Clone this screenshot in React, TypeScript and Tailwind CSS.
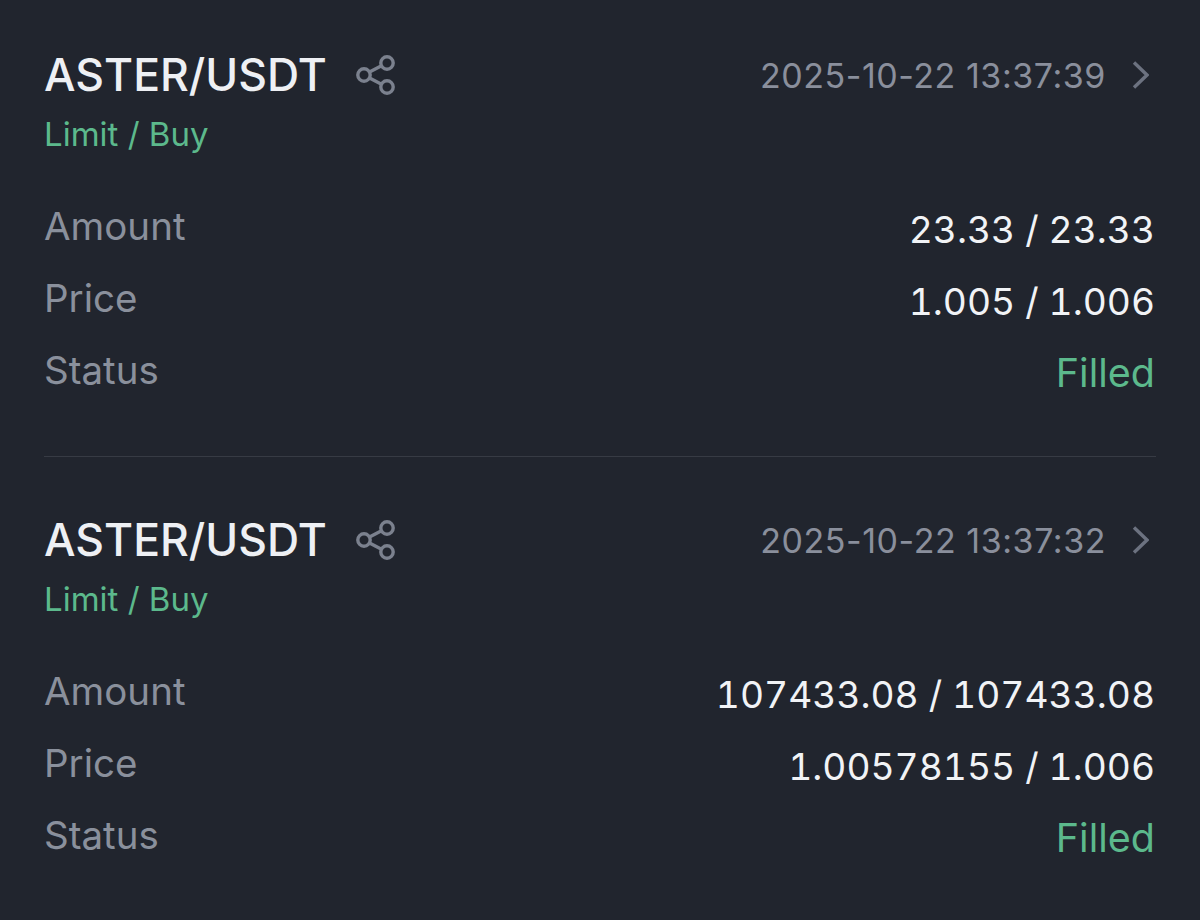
type Order = { time: string; amount: string; price: string };

const orders: Order[] = [
  { time: "2025-10-22 13:37:39", amount: "23.33 / 23.33", price: "1.005 / 1.006" },
  { time: "2025-10-22 13:37:32", amount: "107433.08 / 107433.08", price: "1.00578155 / 1.006" },
];

function ShareIcon() {
  return (
    <svg width="42" height="42" viewBox="0 0 42 42" fill="none" stroke="#7b818e" strokeWidth="3.4">
      <circle cx="10" cy="21" r="6.2" />
      <circle cx="33" cy="9" r="6.2" />
      <circle cx="33" cy="33" r="6.2" />
      <path d="M15.5 18 27.5 11.8M15.5 24 27.5 30.2" />
    </svg>
  );
}

function Chevron() {
  return (
    <svg width="17" height="28" viewBox="0 0 17 28" fill="none" stroke="#6c7280" strokeWidth="3.4">
      <path d="M2 1.5 15 14 2 26.5" />
    </svg>
  );
}

function Row({ label, value, green }: { label: string; value: string; green?: boolean }) {
  return (
    <div className="flex items-center justify-between h-[72px]">
      <span className="text-[38.5px] text-[#8a909c]">{label}</span>
      <span className={green ? "pt-[6px] text-[39.5px] text-[#5cb98c]" : "pt-[6px] text-[37.2px] tabular-nums text-[#f1f3f6]"}>
        {value}
      </span>
    </div>
  );
}

function OrderCard({ order }: { order: Order }) {
  return (
    <div className="pl-[44px] pr-[45px]">
      <div className="flex items-center justify-between h-[50px]">
        <div className="flex items-center gap-[27px]">
          <span className="text-[44.5px] font-medium text-[#eef0f4]">ASTER/USDT</span>
          <ShareIcon />
        </div>
        <div className="flex items-center gap-[26px] pr-[6px]">
          <span className="text-[34px] tracking-[0.55px] text-[#8a8f9c]">{order.time}</span>
          <Chevron />
        </div>
      </div>
      <div className="mt-[9px] text-[33px] leading-[50px] text-[#5cb98c]">Limit / Buy</div>
      <div className="mt-[32px]">
        <Row label="Amount" value={order.amount} />
        <Row label="Price" value={order.price} />
        <Row label="Status" value="Filled" green />
      </div>
    </div>
  );
}

export default function App() {
  return (
    <div className="w-[1200px] h-[920px] overflow-hidden bg-[#21252e] pt-[50px] font-['Inter',sans-serif]">
      <OrderCard order={orders[0]} />
      <div className="mx-[44px] mt-[49px] mb-[58px] h-px bg-[#373b44]" />
      <OrderCard order={orders[1]} />
    </div>
  );
}
